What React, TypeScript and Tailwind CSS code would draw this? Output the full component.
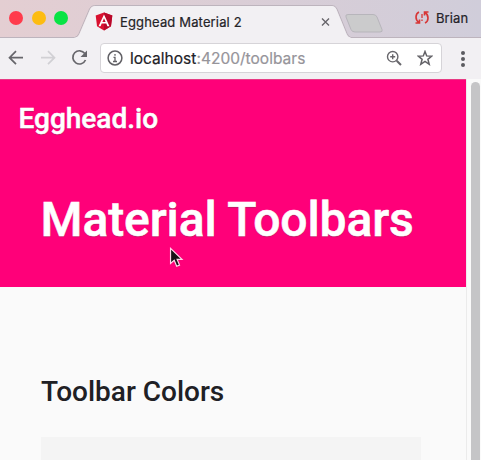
import React from "react";

function TabStrip() {
  return (
    <header className="relative flex h-[37px] w-full items-start bg-linear-to-r from-[#e4ced2] to-[#d0cdda]">
      <svg className="absolute inset-0" width="481" height="38" viewBox="0 0 481 38" fill="none">
        <path d="M0 37.500H74.500Q77.500 37 79 33.500L89.500 9Q91 5.500 94.500 5.500H332Q335.500 5.500 337 9L347 33.500Q348.500 37 351 37.500H481" stroke="#bdb4bd" />
        <path d="M75 38Q78 37.500 79.500 34L90 9.500Q91.500 6 95 6H332Q335 6 336.500 9.500L346.500 34Q348 37.500 351 38Z" fill="#f2f0f3" />
        <path d="M348 14.500H373Q376 14.500 377 17L382 29.500Q383 32 380 32H355Q352 32 351 29.500L346 17Q345 14.500 348 14.500Z" fill="#cbcbcc" stroke="#b7b5bb" />
      </svg>
      <div className="relative ml-[9px] mt-[10.5px] flex gap-[8.5px]">
        <span className="size-[14px] rounded-full bg-[#ff3b4c]" />
        <span className="size-[14px] rounded-full bg-[#fdbc12]" />
        <span className="size-[14px] rounded-full bg-[#08e344]" />
      </div>
      <svg className="relative ml-[27px] mt-[12px] shrink-0" width="18" height="19" viewBox="0 0 18 19">
        <path d="M9 .5 17.300 3.400 16 14.300 9 18.500 2 14.300.700 3.400Z" fill="#d9102f" />
        <path d="M9 .5 17.300 3.400 16 14.300 9 18.500Z" fill="#b8082a" />
        <path d="M9 2.500 14.500 14.200H12.400L11.300 11.600H6.700L5.600 14.200H3.500ZM9 6.200 7.400 10H10.600Z" fill="white" fillRule="evenodd" />
      </svg>
      <span className="relative ml-[7px] mt-[12px] w-[200px] whitespace-nowrap font-['Inter',sans-serif] text-[13px] leading-[20px] tracking-[0.15px] text-[#242327] [-webkit-text-stroke:0.2px_#242327]">Egghead Material 2</span>
      <svg className="relative ml-[1px] mt-[17px] shrink-0" width="9" height="10" viewBox="0 0 9 10" stroke="#67656a" strokeWidth="1.400">
        <path d="m1 1.500 7 7m0-7-7 7" />
      </svg>
      <svg className="relative ml-[85px] mt-[11px] shrink-0" width="14" height="13" viewBox="0 0 14 13" fill="none" stroke="#d73636" strokeWidth="1.600">
        <path d="M4 1C0 3 0 9 4 11.500M.5 12H4.500V8.500M10 12C14 10 14 4 10 1.500M13.500 1H9.500V4.500" />
        <path d="M7 3v4M7 8.500V10" strokeWidth="1.300" />
      </svg>
      <span className="relative ml-[7px] mt-[8px] font-['Inter',sans-serif] text-[13px] leading-[20px] tracking-[0.1px] text-[#252329] [-webkit-text-stroke:0.2px_#252329]">Brian</span>
    </header>
  );
}

function AddressBar() {
  return (
    <div className="flex h-[42px] w-full items-start bg-[#f2f0f3]">
      <svg className="ml-2 mt-[12px] shrink-0" width="82" height="18" viewBox="0 0 82 18" fill="none" strokeWidth="1.700">
        <path d="M15 8.700H2M8 2.200 1.500 8.700 8 15.200" stroke="#67666b" />
        <path d="M33 8.700H46M40 2.200 46.500 8.700 40 15.200" stroke="#d1d0d4" />
        <path d="M76.800 4.500A6.600 6.600 0 1 0 77.500 11" stroke="#67666b" />
        <path d="M79 1.500V8H72.500Z" fill="#67666b" />
      </svg>
      <div className="ml-[10px] mt-[6px] flex h-[30px] w-[342px] items-center rounded-[4px] border border-[#d6d4d8] bg-white">
        <svg className="ml-[6px] shrink-0" width="16" height="16" viewBox="0 0 16 16" fill="none" stroke="#626166" strokeWidth="1.500">
          <circle cx="8" cy="8" r="6.900" />
          <path d="M6.500 7.300H8V11.500M6 11.500h4M8 4v1.700" strokeWidth="1.300" />
        </svg>
        <span className="ml-[7px] mt-[2px] w-[256px] whitespace-nowrap font-['Inter',sans-serif] text-[15.500px] leading-[22px] tracking-[0.02px] text-[#222126] [-webkit-text-stroke:0.2px]">localhost<span className="text-[#96949a]">:4200/toolbars</span></span>
        <svg className="shrink-0" width="17" height="17" viewBox="0 0 17 17" fill="none" stroke="#68676c" strokeWidth="1.400">
          <circle cx="6.700" cy="6.700" r="5.200" /><path d="M4.200 6.700h5M6.700 4.200v5" /><path d="m10.700 10.700 4.300 4.300" strokeWidth="2" />
        </svg>
        <svg className="ml-[14px] shrink-0" width="16" height="16" viewBox="0 0 16 16" fill="none" stroke="#626166" strokeWidth="1.500">
          <path d="M8 1.500 9.700 5.900 14.700 6.200 10.900 9.300 12.200 14.300 8 11.500 3.800 14.300 5.100 9.300 1.300 6.200 6.300 5.900Z" />
        </svg>
      </div>
      <div className="ml-[19px] mt-[13.5px] flex flex-col gap-[2px]">
        <span className="size-[4px] rounded-full bg-[#5c5b60]" />
        <span className="size-[4px] rounded-full bg-[#5c5b60]" />
        <span className="size-[4px] rounded-full bg-[#5c5b60]" />
      </div>
    </div>
  );
}

export default function App() {
  return (
    <div className="relative flex h-[460px] w-[481px] flex-col overflow-hidden bg-[#fafafa]">
      <TabStrip />
      <AddressBar />
      <div className="flex min-h-0 flex-1">
        <main className="w-[466px] font-['Roboto',sans-serif]">
          <section className="h-[208px] border-t border-[#e83a84] bg-[#ff0079] text-white [text-shadow:0_1px_1px_#70404f80]">
            <div className="pl-[18.5px] pt-[21px] text-[28px] font-medium leading-[36px] [-webkit-text-stroke:0.5px_white]">Egghead.io</div>
            <h1 className="pl-[40.5px] pt-[51px] text-[48px] font-medium leading-[64px] tracking-[-0.1px] [-webkit-text-stroke:0.6px_white]">Material Toolbars</h1>
          </section>
          <h2 className="pl-[41px] pt-[87px] text-[28px] font-medium leading-[36px] text-[#202024]">Toolbar Colors</h2>
          <div className="ml-[41px] mt-[27px] h-[23px] w-[380px] bg-[#f4f4f4]" />
        </main>
        <aside className="w-[15px] border-l border-[#ebebeb] bg-[#fafafa] pl-[4px] pt-[3px]">
          <div className="h-[400px] w-[9px] rounded-t-full bg-[#c5c5c7]" />
        </aside>
      </div>
      <svg className="absolute left-[168.5px] top-[247px]" width="15" height="22" viewBox="0 0 16 24">
        <path d="M1.500 1.500V18L5.500 14.500 8.200 21 11.300 19.700 8.700 13.500H14Z" fill="#181216" stroke="#ffd6e9" strokeWidth="1.300" />
      </svg>
    </div>
  );
}
